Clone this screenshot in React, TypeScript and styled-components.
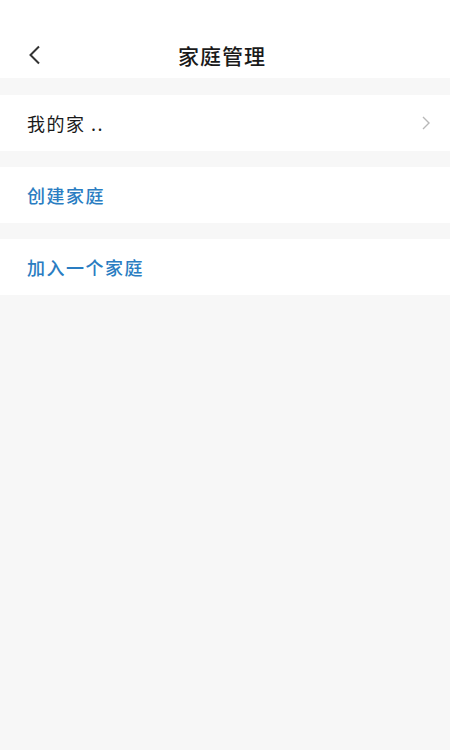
import React from "react";
import styled, { createGlobalStyle } from "styled-components";

const Global = createGlobalStyle`
  html, body { margin: 0; padding: 0; background: #f7f7f7; }
  body { font-family: "Noto Sans CJK SC", "Noto Sans", sans-serif; }
`;

const Page = styled.div`
  width: 450px;
  min-height: 750px;
  background: #f7f7f7;
  display: flex;
  flex-direction: column;
`;

const Header = styled.header`
  height: 78px;
  background: #ffffff;
  display: grid;
  grid-template-columns: 60px 1fr 60px;
  align-items: center;
  padding-top: 32px;
  box-sizing: border-box;
  margin-bottom: 17px;
`;

const Back = styled.button`
  border: 0;
  background: none;
  padding: 0 0 0 26px;
  display: flex;
  align-items: center;
  height: 24px;
`;

const Title = styled.h1`
  margin: 0 0 0 -6px;
  text-align: center;
  font-size: 21px;
  line-height: 24px;
  font-weight: 500;
  color: #1a1a1a;
  letter-spacing: 1px;
`;

const Group = styled.div`
  display: flex;
  flex-direction: column;
  gap: 16px;
`;

const Row = styled.div`
  height: 56px;
  background: #ffffff;
  display: flex;
  align-items: center;
  justify-content: space-between;
  padding: 0 19px 0 27px;
`;

const Label = styled.span<{ $accent?: boolean }>`
  font-size: 18px;
  color: ${(p) => (p.$accent ? "#2a7dc2" : "#1a1a1a")};
  font-weight: ${(p) => (p.$accent ? 500 : 400)};
  letter-spacing: 1.5px;
`;

export default function App() {
  return (
    <Page>
      <Global />
      <Header>
        <Back aria-label="back">
          <svg width="16" height="22" viewBox="0 0 16 22">
            <path d="M13 2.5 L4.5 11 L13 19.5" fill="none" stroke="#333" strokeWidth="2" />
          </svg>
        </Back>
        <Title>家庭管理</Title>
        <span />
      </Header>
      <Group>
        <Row>
          <Label>我的家 ..</Label>
          <svg width="10" height="16" viewBox="0 0 10 16">
            <path d="M2 2 L8 8 L2 14" fill="none" stroke="#b8b8b8" strokeWidth="1.4" />
          </svg>
        </Row>
        <Row>
          <Label $accent>创建家庭</Label>
        </Row>
        <Row>
          <Label $accent>加入一个家庭</Label>
        </Row>
      </Group>
    </Page>
  );
}
